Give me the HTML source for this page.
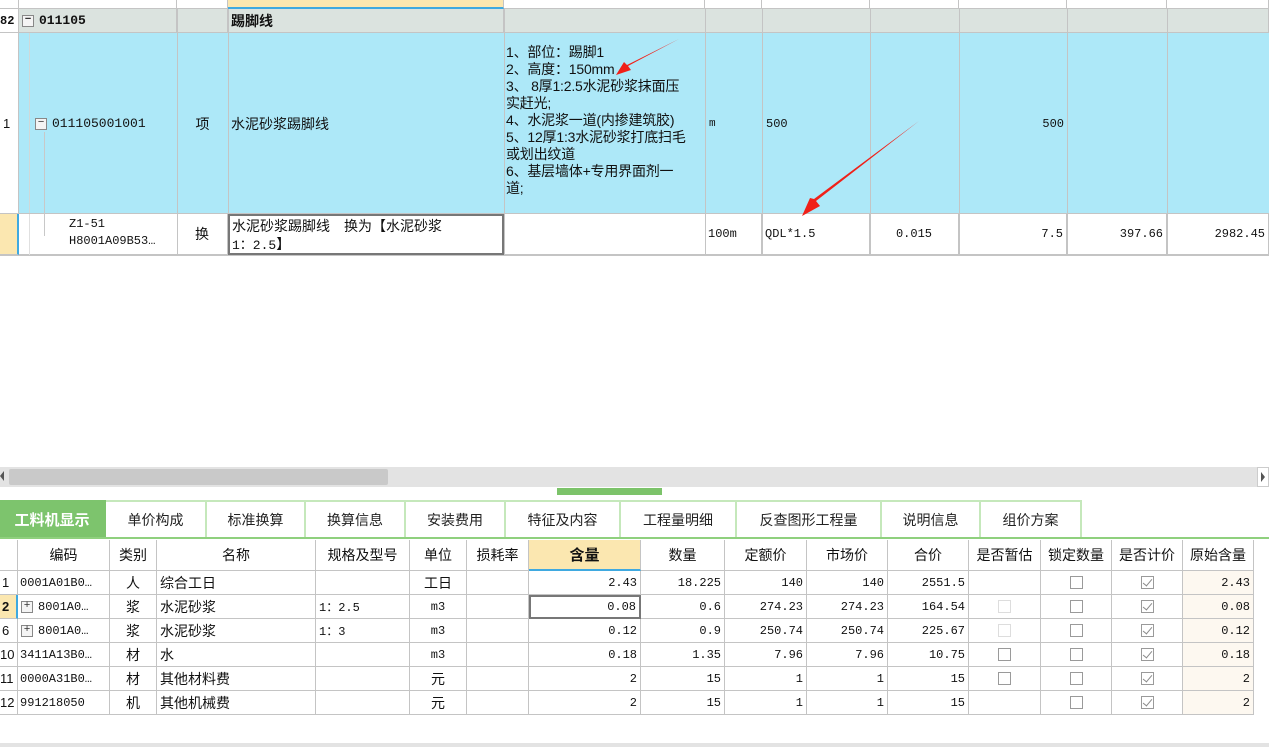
<!DOCTYPE html>
<html><head><meta charset="utf-8"><style>
*{margin:0;padding:0;box-sizing:border-box}
body{width:1269px;height:747px;position:relative;overflow:hidden;background:#fff;font-family:"Liberation Sans","Noto Sans CJK SC",sans-serif;font-size:13px;color:#111}
.c{position:absolute;border-right:1px solid #c4c4c4;border-bottom:1px solid #c4c4c4;white-space:nowrap;overflow:hidden;display:flex;align-items:center;padding:0 3px}
.r{justify-content:flex-end}
.m{justify-content:center}
.n{font-family:"Liberation Mono","Noto Sans CJK SC",monospace;font-size:12px}
.bx{display:inline-block;width:12px;height:12px;border:1px solid #888;background:#f4f4f4;position:relative;margin-right:5px;font-size:11px;line-height:9px;text-align:center;color:#333}
.cb{width:13px;height:13px;border:1px solid #9a9a9a;background:#fff;display:inline-block}
.cbl{border-color:#ddd}
.ck{width:13px;height:13px;border:1px solid #9a9a9a;background:#fff;display:inline-block;position:relative}
.ck:after{content:"";position:absolute;left:3px;top:0px;width:4px;height:8px;border:solid #8a8a8a;border-width:0 1.5px 1.5px 0;transform:rotate(40deg)}
.tab{position:absolute;top:500px;height:37px;border-right:2px solid #c5e8bb;border-top:2px solid #c5e8bb;display:flex;align-items:center;justify-content:center;font-size:14px;color:#222}
.vl{position:absolute;width:1px;background:#c4c4c4}
</style></head><body>

<!-- top header row -->
<div class="c" style="left:0;top:0;width:19px;height:9px"></div>
<div class="c" style="left:19px;top:0;width:158px;height:9px"></div>
<div class="c" style="left:177px;top:0;width:51px;height:9px"></div>
<div class="c" style="left:228px;top:0;width:276px;height:9px;background:#fbe7b0;border-bottom:2px solid #3fa9e0"></div>
<div class="c" style="left:504px;top:0;width:201px;height:9px"></div>
<div class="c" style="left:705px;top:0;width:57px;height:9px"></div>
<div class="c" style="left:762px;top:0;width:108px;height:9px"></div>
<div class="c" style="left:870px;top:0;width:89px;height:9px"></div>
<div class="c" style="left:959px;top:0;width:108px;height:9px"></div>
<div class="c" style="left:1067px;top:0;width:100px;height:9px"></div>
<div class="c" style="left:1167px;top:0;width:102px;height:9px"></div>

<!-- row 82 -->
<div class="c n" style="left:0;top:9px;width:19px;height:24px;font-weight:bold;padding:0">82</div>
<div class="c n" style="left:19px;top:9px;width:158px;height:24px;background:#dbe3df;font-weight:bold;font-size:13px"><span class="bx">−</span>011105</div>
<div class="c" style="left:177px;top:9px;width:51px;height:24px;background:#dbe3df"></div>
<div class="c" style="left:228px;top:9px;width:276px;height:24px;background:#dbe3df;font-weight:bold;font-size:14px">踢脚线</div>
<div class="c" style="left:504px;top:9px;width:765px;height:24px;background:#dbe3df"></div>

<!-- row 1 -->
<div class="c" style="left:0;top:33px;width:19px;height:181px;padding:0 0 0 3px;background:#fff">1</div>
<div class="c" style="left:19px;top:33px;width:1250px;height:181px;background:#ade8f8;border-right:none"></div>
<div style="position:absolute;left:29px;top:33px;width:1px;height:180px;background:#d0d8d8"></div>
<div style="position:absolute;left:44px;top:132px;width:1px;height:104px;background:#c8c8c8"></div>
<div style="position:absolute;left:44px;top:236px;width:20px;height:1px;background:#c8c8c8"></div>
<div class="c n" style="left:30px;top:33px;width:147px;height:181px;border:none;padding-left:5px;font-size:13px"><span class="bx">−</span>011105001001</div>
<div class="c m" style="left:177px;top:33px;width:51px;height:181px;border:none;font-size:14px">项</div>
<div class="c" style="left:228px;top:33px;width:276px;height:181px;border:none;font-size:14px">水泥砂浆踢脚线</div>
<div style="position:absolute;left:506px;top:44px;width:200px;font-size:14px;line-height:17px;white-space:pre;letter-spacing:-0.2px">1、部位：踢脚1
2、高度：150mm
3、 8厚1:2.5水泥砂浆抹面压
实赶光;
4、水泥浆一道(内掺建筑胶)
5、12厚1:3水泥砂浆打底扫毛
或划出纹道
6、基层墙体+专用界面剂一
道;</div>
<div class="c n" style="left:706px;top:33px;width:56px;height:181px;border:none;font-size:11px">m</div>
<div class="c n" style="left:763px;top:33px;width:107px;height:181px;border:none">500</div>
<div class="c n r" style="left:960px;top:33px;width:107px;height:181px;border:none">500</div>

<!-- row Z1 -->
<div class="c" style="left:0;top:214px;width:19px;height:41px;background:#fbe7b0;border-right:2px solid #3fa9e0"></div>
<div class="c" style="left:19px;top:214px;width:1250px;height:41px;background:#fff"></div>
<div style="position:absolute;left:29px;top:214px;width:1px;height:41px;background:#e0e0e0"></div>
<div style="position:absolute;left:44px;top:214px;width:1px;height:22px;background:#c8c8c8"></div>
<div style="position:absolute;left:69px;top:216px;font-family:'Liberation Mono',monospace;font-size:12px;line-height:17px">Z1-51<br>H8001A09B53…</div>
<div class="c m" style="left:177px;top:214px;width:51px;height:41px;font-size:14px">换</div>
<div class="c n" style="left:705px;top:214px;width:57px;height:41px">100m</div>
<div class="c n" style="left:762px;top:214px;width:108px;height:41px">QDL*1.5</div>
<div class="c n m" style="left:870px;top:214px;width:89px;height:41px">0.015</div>
<div class="c n r" style="left:959px;top:214px;width:108px;height:41px">7.5</div>
<div class="c n r" style="left:1067px;top:214px;width:100px;height:41px">397.66</div>
<div class="c n r" style="left:1167px;top:214px;width:102px;height:41px">2982.45</div>
<div style="position:absolute;left:0;top:255px;width:1269px;height:1px;background:#c4c4c4"></div>

<!-- vertical grid lines on top -->
<div class="vl" style="left:177px;top:9px;height:246px"></div>
<div class="vl" style="left:228px;top:9px;height:205px"></div>
<div class="vl" style="left:504px;top:9px;height:246px"></div>
<div class="vl" style="left:705px;top:9px;height:246px"></div>
<div class="vl" style="left:762px;top:9px;height:246px"></div>
<div class="vl" style="left:870px;top:9px;height:246px"></div>
<div class="vl" style="left:959px;top:9px;height:246px"></div>
<div class="vl" style="left:1067px;top:9px;height:246px"></div>
<div class="vl" style="left:1167px;top:9px;height:246px"></div>
<div style="position:absolute;left:228px;top:214px;width:276px;height:41px;border:2px solid #777;background:#fff;font-size:14px;line-height:18px;padding:1px 2px;white-space:nowrap">水泥砂浆踢脚线　换为【水泥砂浆<br><span class="n" style="font-size:13px">1：2.5</span>】</div>

<!-- arrows -->
<svg style="position:absolute;left:0;top:0" width="1269" height="260">
<polygon points="679,39 628,66 631,70 616,75 624,62 627,65" fill="#f02018"/>
<polygon points="919,121 816,201 820,206 802,216 810,198 814,199" fill="#f02018"/>
</svg>

<!-- scrollbar -->
<div style="position:absolute;left:0;top:467px;width:1269px;height:20px;background:#e3e3e3"></div>
<div style="position:absolute;left:9px;top:469px;width:379px;height:16px;background:#c9c9c9;border-radius:2px"></div>
<div style="position:absolute;left:0;top:471px;width:0;height:0;border-top:5px solid transparent;border-bottom:5px solid transparent;border-right:4px solid #555"></div>
<div style="position:absolute;left:1257px;top:467px;width:12px;height:20px;background:#fff;border:1px solid #ccc"></div>
<div style="position:absolute;left:1261px;top:472px;width:0;height:0;border-top:5px solid transparent;border-bottom:5px solid transparent;border-left:4px solid #555"></div>
<div style="position:absolute;left:557px;top:488px;width:105px;height:7px;background:#7cc36a"></div>

<!-- tabs -->
<div class="tab" style="left:0;width:106px;background:#7dc46d;color:#fff;font-weight:bold;font-size:15px;border-color:#7dc46d">工料机显示</div>
<div class="tab" style="left:106px;width:101px">单价构成</div>
<div class="tab" style="left:207px;width:99px">标准换算</div>
<div class="tab" style="left:306px;width:100px">换算信息</div>
<div class="tab" style="left:406px;width:100px">安装费用</div>
<div class="tab" style="left:506px;width:115px">特征及内容</div>
<div class="tab" style="left:621px;width:116px">工程量明细</div>
<div class="tab" style="left:737px;width:145px">反查图形工程量</div>
<div class="tab" style="left:882px;width:99px">说明信息</div>
<div class="tab" style="left:981px;width:101px">组价方案</div>
<div style="position:absolute;left:0;top:537px;width:1269px;height:2px;background:#8fd07e"></div>

<!-- bottom table -->
<div style="position:absolute;left:0;top:540px">
<div class="c" style="left:0;top:0;width:18px;height:31px"></div>
<div class="c m" style="left:18px;top:0;width:92px;height:31px;font-size:14px">编码</div>
<div class="c m" style="left:110px;top:0;width:47px;height:31px;font-size:14px">类别</div>
<div class="c m" style="left:157px;top:0;width:159px;height:31px;font-size:14px">名称</div>
<div class="c m" style="left:316px;top:0;width:94px;height:31px;font-size:14px">规格及型号</div>
<div class="c m" style="left:410px;top:0;width:57px;height:31px;font-size:14px">单位</div>
<div class="c m" style="left:467px;top:0;width:62px;height:31px;font-size:14px">损耗率</div>
<div class="c m" style="left:529px;top:0;width:112px;height:31px;font-size:15px;font-weight:bold;background:#fbe7b0;border-bottom:2px solid #3fa9e0">含量</div>
<div class="c m" style="left:641px;top:0;width:84px;height:31px;font-size:14px">数量</div>
<div class="c m" style="left:725px;top:0;width:82px;height:31px;font-size:14px">定额价</div>
<div class="c m" style="left:807px;top:0;width:81px;height:31px;font-size:14px">市场价</div>
<div class="c m" style="left:888px;top:0;width:81px;height:31px;font-size:14px">合价</div>
<div class="c m" style="left:969px;top:0;width:72px;height:31px;font-size:14px;padding:0">是否暂估</div>
<div class="c m" style="left:1041px;top:0;width:71px;height:31px;font-size:14px;padding:0">锁定数量</div>
<div class="c m" style="left:1112px;top:0;width:71px;height:31px;font-size:14px;padding:0">是否计价</div>
<div class="c m" style="left:1183px;top:0;width:71px;height:31px;font-size:14px;padding:0">原始含量</div>
</div>

<div style="position:absolute;left:0;top:571px">
<div class="c" style="left:0;top:0;width:18px;height:24px;padding:0 0 0 2px">1</div>
<div class="c n" style="left:18px;top:0;width:92px;height:24px;padding:0 2px">0001A01B0…</div>
<div class="c m" style="left:110px;top:0;width:47px;height:24px;font-size:14px">人</div>
<div class="c" style="left:157px;top:0;width:159px;height:24px;font-size:14px">综合工日</div>
<div class="c" style="left:316px;top:0;width:94px;height:24px"></div>
<div class="c m" style="left:410px;top:0;width:57px;height:24px;font-size:14px">工日</div>
<div class="c" style="left:467px;top:0;width:62px;height:24px"></div>
<div class="c n r" style="left:529px;top:0;width:112px;height:24px">2.43</div>
<div class="c n r" style="left:641px;top:0;width:84px;height:24px">18.225</div>
<div class="c n r" style="left:725px;top:0;width:82px;height:24px">140</div>
<div class="c n r" style="left:807px;top:0;width:81px;height:24px">140</div>
<div class="c n r" style="left:888px;top:0;width:81px;height:24px">2551.5</div>
<div class="c m" style="left:969px;top:0;width:72px;height:24px"></div>
<div class="c m" style="left:1041px;top:0;width:71px;height:24px"><span class="cb"></span></div>
<div class="c m" style="left:1112px;top:0;width:71px;height:24px"><span class="ck"></span></div>
<div class="c n r" style="left:1183px;top:0;width:71px;height:24px;background:#fdf8f0">2.43</div>

<div class="c" style="left:0;top:24px;width:18px;height:24px;padding:0 0 0 2px;background:#fbe7b0;border-right:2px solid #3fa9e0;font-weight:bold">2</div>
<div class="c n" style="left:18px;top:24px;width:92px;height:24px;padding:0 3px"><span class="bx">+</span>8001A0…</div>
<div class="c m" style="left:110px;top:24px;width:47px;height:24px;font-size:14px">浆</div>
<div class="c" style="left:157px;top:24px;width:159px;height:24px;font-size:14px">水泥砂浆</div>
<div class="c n" style="left:316px;top:24px;width:94px;height:24px">1：2.5</div>
<div class="c m n" style="left:410px;top:24px;width:57px;height:24px">m3</div>
<div class="c" style="left:467px;top:24px;width:62px;height:24px"></div>
<div class="c n r" style="left:529px;top:24px;width:112px;height:24px;border:2px solid #777">0.08</div>
<div class="c n r" style="left:641px;top:24px;width:84px;height:24px">0.6</div>
<div class="c n r" style="left:725px;top:24px;width:82px;height:24px">274.23</div>
<div class="c n r" style="left:807px;top:24px;width:81px;height:24px">274.23</div>
<div class="c n r" style="left:888px;top:24px;width:81px;height:24px">164.54</div>
<div class="c m" style="left:969px;top:24px;width:72px;height:24px"><span class="cb cbl"></span></div>
<div class="c m" style="left:1041px;top:24px;width:71px;height:24px"><span class="cb"></span></div>
<div class="c m" style="left:1112px;top:24px;width:71px;height:24px"><span class="ck"></span></div>
<div class="c n r" style="left:1183px;top:24px;width:71px;height:24px;background:#fdf8f0">0.08</div>

<div class="c" style="left:0;top:48px;width:18px;height:24px;padding:0 0 0 2px">6</div>
<div class="c n" style="left:18px;top:48px;width:92px;height:24px;padding:0 3px"><span class="bx">+</span>8001A0…</div>
<div class="c m" style="left:110px;top:48px;width:47px;height:24px;font-size:14px">浆</div>
<div class="c" style="left:157px;top:48px;width:159px;height:24px;font-size:14px">水泥砂浆</div>
<div class="c n" style="left:316px;top:48px;width:94px;height:24px">1：3</div>
<div class="c m n" style="left:410px;top:48px;width:57px;height:24px">m3</div>
<div class="c" style="left:467px;top:48px;width:62px;height:24px"></div>
<div class="c n r" style="left:529px;top:48px;width:112px;height:24px">0.12</div>
<div class="c n r" style="left:641px;top:48px;width:84px;height:24px">0.9</div>
<div class="c n r" style="left:725px;top:48px;width:82px;height:24px">250.74</div>
<div class="c n r" style="left:807px;top:48px;width:81px;height:24px">250.74</div>
<div class="c n r" style="left:888px;top:48px;width:81px;height:24px">225.67</div>
<div class="c m" style="left:969px;top:48px;width:72px;height:24px"><span class="cb cbl"></span></div>
<div class="c m" style="left:1041px;top:48px;width:71px;height:24px"><span class="cb"></span></div>
<div class="c m" style="left:1112px;top:48px;width:71px;height:24px"><span class="ck"></span></div>
<div class="c n r" style="left:1183px;top:48px;width:71px;height:24px;background:#fdf8f0">0.12</div>

<div class="c" style="left:0;top:72px;width:18px;height:24px;padding:0">10</div>
<div class="c n" style="left:18px;top:72px;width:92px;height:24px;padding:0 2px">3411A13B0…</div>
<div class="c m" style="left:110px;top:72px;width:47px;height:24px;font-size:14px">材</div>
<div class="c" style="left:157px;top:72px;width:159px;height:24px;font-size:14px">水</div>
<div class="c" style="left:316px;top:72px;width:94px;height:24px"></div>
<div class="c m n" style="left:410px;top:72px;width:57px;height:24px">m3</div>
<div class="c" style="left:467px;top:72px;width:62px;height:24px"></div>
<div class="c n r" style="left:529px;top:72px;width:112px;height:24px">0.18</div>
<div class="c n r" style="left:641px;top:72px;width:84px;height:24px">1.35</div>
<div class="c n r" style="left:725px;top:72px;width:82px;height:24px">7.96</div>
<div class="c n r" style="left:807px;top:72px;width:81px;height:24px">7.96</div>
<div class="c n r" style="left:888px;top:72px;width:81px;height:24px">10.75</div>
<div class="c m" style="left:969px;top:72px;width:72px;height:24px"><span class="cb"></span></div>
<div class="c m" style="left:1041px;top:72px;width:71px;height:24px"><span class="cb"></span></div>
<div class="c m" style="left:1112px;top:72px;width:71px;height:24px"><span class="ck"></span></div>
<div class="c n r" style="left:1183px;top:72px;width:71px;height:24px;background:#fdf8f0">0.18</div>

<div class="c" style="left:0;top:96px;width:18px;height:24px;padding:0">11</div>
<div class="c n" style="left:18px;top:96px;width:92px;height:24px;padding:0 2px">0000A31B0…</div>
<div class="c m" style="left:110px;top:96px;width:47px;height:24px;font-size:14px">材</div>
<div class="c" style="left:157px;top:96px;width:159px;height:24px;font-size:14px">其他材料费</div>
<div class="c" style="left:316px;top:96px;width:94px;height:24px"></div>
<div class="c m" style="left:410px;top:96px;width:57px;height:24px;font-size:14px">元</div>
<div class="c" style="left:467px;top:96px;width:62px;height:24px"></div>
<div class="c n r" style="left:529px;top:96px;width:112px;height:24px">2</div>
<div class="c n r" style="left:641px;top:96px;width:84px;height:24px">15</div>
<div class="c n r" style="left:725px;top:96px;width:82px;height:24px">1</div>
<div class="c n r" style="left:807px;top:96px;width:81px;height:24px">1</div>
<div class="c n r" style="left:888px;top:96px;width:81px;height:24px">15</div>
<div class="c m" style="left:969px;top:96px;width:72px;height:24px"><span class="cb"></span></div>
<div class="c m" style="left:1041px;top:96px;width:71px;height:24px"><span class="cb"></span></div>
<div class="c m" style="left:1112px;top:96px;width:71px;height:24px"><span class="ck"></span></div>
<div class="c n r" style="left:1183px;top:96px;width:71px;height:24px;background:#fdf8f0">2</div>

<div class="c" style="left:0;top:120px;width:18px;height:24px;padding:0">12</div>
<div class="c n" style="left:18px;top:120px;width:92px;height:24px;padding:0 2px">991218050</div>
<div class="c m" style="left:110px;top:120px;width:47px;height:24px;font-size:14px">机</div>
<div class="c" style="left:157px;top:120px;width:159px;height:24px;font-size:14px">其他机械费</div>
<div class="c" style="left:316px;top:120px;width:94px;height:24px"></div>
<div class="c m" style="left:410px;top:120px;width:57px;height:24px;font-size:14px">元</div>
<div class="c" style="left:467px;top:120px;width:62px;height:24px"></div>
<div class="c n r" style="left:529px;top:120px;width:112px;height:24px">2</div>
<div class="c n r" style="left:641px;top:120px;width:84px;height:24px">15</div>
<div class="c n r" style="left:725px;top:120px;width:82px;height:24px">1</div>
<div class="c n r" style="left:807px;top:120px;width:81px;height:24px">1</div>
<div class="c n r" style="left:888px;top:120px;width:81px;height:24px">15</div>
<div class="c m" style="left:969px;top:120px;width:72px;height:24px"></div>
<div class="c m" style="left:1041px;top:120px;width:71px;height:24px"><span class="cb"></span></div>
<div class="c m" style="left:1112px;top:120px;width:71px;height:24px"><span class="ck"></span></div>
<div class="c n r" style="left:1183px;top:120px;width:71px;height:24px;background:#fdf8f0">2</div>
</div>

<div style="position:absolute;left:0;top:743px;width:1269px;height:4px;background:#e3e3e3"></div>
</body></html>
